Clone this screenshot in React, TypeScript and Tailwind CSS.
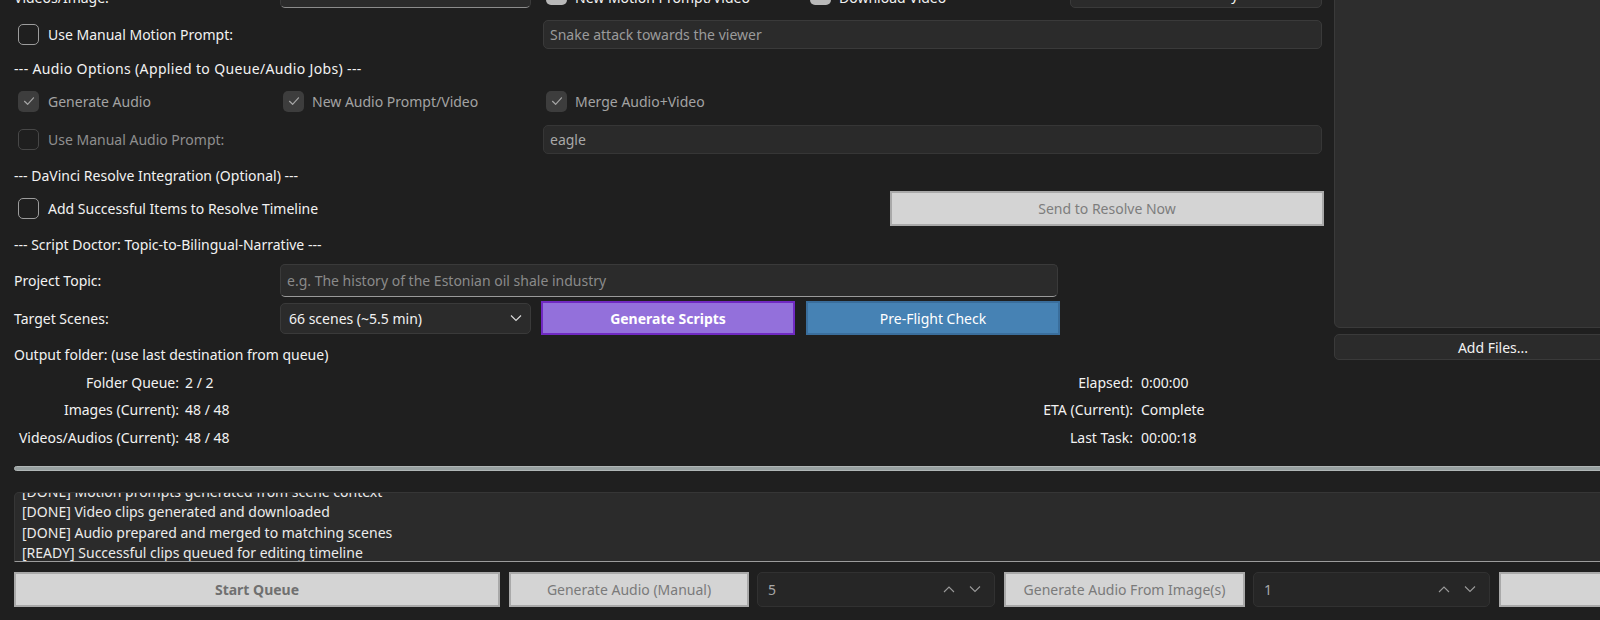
import React from 'react';

const Tick = ({ color = '#a6a6a6' }: { color?: string }) => (
  <svg width="14" height="14" viewBox="0 0 14 14" fill="none">
    <path d="M2.5 7.3 L5.6 10.3 L11.5 3.8" stroke={color} strokeWidth="1.2" strokeLinecap="round" strokeLinejoin="round" />
  </svg>
);

const Box = ({ state }: { state: 'off' | 'offDisabled' | 'onDisabled' | 'on' }) => {
  if (state === 'on') return <span className="h-[21px] w-[21px] shrink-0 rounded-[5px] bg-[#b8b8b8]" />;
  if (state === 'onDisabled')
    return (
      <span className="flex h-[21px] w-[21px] shrink-0 items-center justify-center rounded-[5px] bg-[#3d3d3d]">
        <Tick />
      </span>
    );
  return (
    <span
      className={`h-[21px] w-[21px] shrink-0 rounded-[5px] border ${state === 'off' ? 'border-[#9c9c9c]' : 'border-[#474747]'}`}
    />
  );
};

const Chevron = ({ up }: { up?: boolean }) => (
  <svg width="12" height="8" viewBox="0 0 12 8" fill="none">
    <path d={up ? 'M1 7 L6 2 L11 7' : 'M1 1.5 L6 6.5 L11 1.5'} stroke="#9a9a9a" strokeWidth="1.1" />
  </svg>
);

const Header = ({ children, mt, extra = '' }: { children: React.ReactNode; mt: string; extra?: string }) => (
  <div className={`flex h-[20px] items-center ${mt} ${extra}`}>{children}</div>
);

const Spin = ({ value, w }: { value: string; w: string }) => (
  <div className={`flex h-[35px] shrink-0 items-center rounded-[5px] border border-[#313131] bg-[#262626] pl-[10px] pr-[13px] text-[#a8a8a8] ${w}`}>
    <span className="flex-1">{value}</span>
    <div className="flex items-center gap-[14px]">
      <Chevron up />
      <Chevron />
    </div>
  </div>
);

const stats = [
  ['Folder Queue:', '2 / 2', 'Elapsed:', '0:00:00'],
  ['Images (Current):', '48 / 48', 'ETA (Current):', 'Complete'],
  ['Videos/Audios (Current):', '48 / 48', 'Last Task:', '00:00:18'],
];

const logLines = [
  '[DONE] Motion prompts generated from scene context',
  '[DONE] Video clips generated and downloaded',
  '[DONE] Audio prepared and merged to matching scenes',
  '[READY] Successful clips queued for editing timeline',
];

const lightBtn = 'shrink-0 border-2 border-[#a9a9a9] bg-[#d4d4d4]';

export default function App() {
  return (
    <div className="h-[620px] w-[1600px] overflow-hidden bg-[#1f1f1f] font-['Noto_Sans',sans-serif] text-[14px] text-[#f2f2f2]">
      <div className="w-[1760px] pl-[14px]">
        {/* Upper area: options on the left, file list on the right */}
        <div className="-mt-[23px] flex gap-[10px]">
          <div className="flex w-[1310px] shrink-0 flex-col">
            {/* Videos/Image row (scrolled mostly out of view) */}
            <div className="flex h-[31px] items-center">
              <span className="w-[266px] shrink-0 pt-[10px]">Videos/Image:</span>
              <div className="h-[31px] w-[251px] shrink-0 rounded-[5px] border border-[#3a3a3a] border-b-[#8c8c8c] bg-[#2b2b2b]" />
              <div className="ml-[12px] flex w-[264px] shrink-0 items-center gap-[8px] pl-[3px] pt-[3px]">
                <Box state="on" />
                <span className="pt-[7px]">New Motion Prompt/Video</span>
              </div>
              <div className="flex w-[263px] shrink-0 items-center gap-[8px] pl-[3px] pt-[3px]">
                <Box state="on" />
                <span className="pt-[7px]">Download Video</span>
              </div>
              <button className="h-[30px] w-[252px] shrink-0 rounded-[5px] border border-[#3a3a3a] bg-[#2b2b2b] pt-[4px]">Clear History</button>
            </div>

            <div className="mt-[12px] flex h-[29px] items-center">
              <div className="flex w-[529px] shrink-0 items-center gap-[9px] pl-[4px]">
                <Box state="off" />
                <span>Use Manual Motion Prompt:</span>
              </div>
              <div className="flex h-[29px] w-[779px] shrink-0 items-center rounded-[5px] border border-[#3a3a3a] bg-[#2b2b2b] px-[6px] text-[#9b9b9b]">
                Snake attack towards the viewer
              </div>
            </div>

            <Header mt="mt-[9px]" extra="tracking-[0.35px]">--- Audio Options (Applied to Queue/Audio Jobs) ---</Header>

            <div className="mt-[12px] flex h-[22px] items-center text-[#a3a3a3]">
              <div className="flex w-[266px] shrink-0 items-center gap-[9px] pl-[4px]">
                <Box state="onDisabled" />
                <span>Generate Audio</span>
              </div>
              <div className="flex w-[263px] shrink-0 items-center gap-[8px] pl-[3px]">
                <Box state="onDisabled" />
                <span>New Audio Prompt/Video</span>
              </div>
              <div className="flex items-center gap-[8px] pl-[3px]">
                <Box state="onDisabled" />
                <span>Merge Audio+Video</span>
              </div>
            </div>

            <div className="mt-[13px] flex h-[29px] items-center">
              <div className="flex w-[529px] shrink-0 items-center gap-[9px] pl-[4px] text-[#8f8f8f]">
                <Box state="offDisabled" />
                <span>Use Manual Audio Prompt:</span>
              </div>
              <div className="flex h-[29px] w-[779px] shrink-0 items-center rounded-[5px] border border-[#363636] bg-[#2a2a2a] px-[6px] text-[#a8a8a8]">
                eagle
              </div>
            </div>

            <Header mt="mt-[11px]">--- DaVinci Resolve Integration (Optional) ---</Header>

            <div className="mt-[6px] flex h-[35px] items-center justify-between">
              <div className="flex items-center gap-[9px] pl-[4px]">
                <Box state="off" />
                <span>Add Successful Items to Resolve Timeline</span>
              </div>
              <button className={`h-[35px] w-[434px] text-[#7d7d7d] ${lightBtn}`}>Send to Resolve Now</button>
            </div>

            <Header mt="mt-[8px]">--- Script Doctor: Topic-to-Bilingual-Narrative ---</Header>

            <div className="mt-[9px] flex h-[34px] items-center">
              <span className="w-[266px] shrink-0">Project Topic:</span>
              <div className="flex h-[33px] w-[778px] shrink-0 items-center rounded-[5px] border border-[#3a3a3a] border-b-[#9a9a9a] bg-[#2b2b2b] px-[6px] text-[#8a8a8a]">
                e.g. The history of the Estonian oil shale industry
              </div>
            </div>

            <div className="mt-[4px] flex h-[34px] items-center">
              <span className="w-[266px] shrink-0">Target Scenes:</span>
              <div className="flex h-[31px] w-[251px] shrink-0 items-center justify-between rounded-[5px] border border-[#3a3a3a] bg-[#2b2b2b] pl-[8px] pr-[8px]">
                <span>66 scenes (~5.5 min)</span>
                <svg width="12" height="8" viewBox="0 0 12 8" fill="none">
                  <path d="M1 1.5 L6 6.5 L11 1.5" stroke="#d8d8d8" strokeWidth="1.2" />
                </svg>
              </div>
              <button className="ml-[10px] h-[34px] w-[254px] shrink-0 border-2 border-[#7029c2] bg-[#9370db] font-bold text-white">Generate Scripts</button>
              <button className="ml-[11px] h-[34px] w-[254px] shrink-0 border-2 border-[#3a6e9c] bg-[#4682b4] text-white">Pre-Flight Check</button>
            </div>

            <div className="mt-[9px] flex h-[20px] items-center">Output folder: (use last destination from queue)</div>
          </div>

          <div className="flex w-[330px] shrink-0 flex-col">
            <div className="h-[351px] rounded-bl-[6px] border border-[#3a3a3a] bg-[#2d2d2d]" />
            <button className="mt-[6px] h-[26px] w-[318px] rounded-[5px] border border-[#3a3a3a] bg-[#2b2b2b]">Add Files...</button>
          </div>
        </div>

        {/* Progress counters */}
        <div className="mt-[8px] flex flex-col gap-[7px]">
          {stats.map(([l1, v1, l2, v2], i) => (
            <div key={i} className="flex h-[20.5px] items-center">
              <span className="w-[165px] shrink-0 text-right">{l1}</span>
              <span className="w-[600px] shrink-0 pl-[6px]">{v1}</span>
              <span className="w-[354px] shrink-0 text-right">{l2}</span>
              <span className="pl-[8px]">{v2}</span>
            </div>
          ))}
        </div>

        <div className="mt-[18px] h-[5px] rounded-full border border-[#b0b6b6] bg-[#97a0a0]" />

        {/* Log */}
        <div className="mt-[21px] h-[70px] overflow-hidden rounded-tl-[5px] border border-[#363636] border-b-[#9c9c9c] bg-[#2b2b2b] pl-[7px] text-[#ececec]">
          <div className="-mt-[11px]">
            {logLines.map((line) => (
              <div key={line} className="h-[20.5px] leading-[20.5px]">
                {line}
              </div>
            ))}
          </div>
        </div>

        {/* Bottom action row */}
        <div className="mt-[10px] flex h-[35px] items-center">
          <button className={`h-[35px] w-[486px] font-bold text-[#707070] ${lightBtn}`}>Start Queue</button>
          <button className={`ml-[9px] h-[35px] w-[240px] text-[#7a7a7a] ${lightBtn}`}>Generate Audio (Manual)</button>
          <div className="ml-[8px]">
            <Spin value="5" w="w-[238px]" />
          </div>
          <button className={`ml-[9px] h-[35px] w-[241px] text-[#7a7a7a] ${lightBtn}`}>Generate Audio From Image(s)</button>
          <div className="ml-[8px]">
            <Spin value="1" w="w-[237px]" />
          </div>
          <button className={`ml-[9px] h-[35px] w-[200px] ${lightBtn}`} />
        </div>
      </div>
    </div>
  );
}
